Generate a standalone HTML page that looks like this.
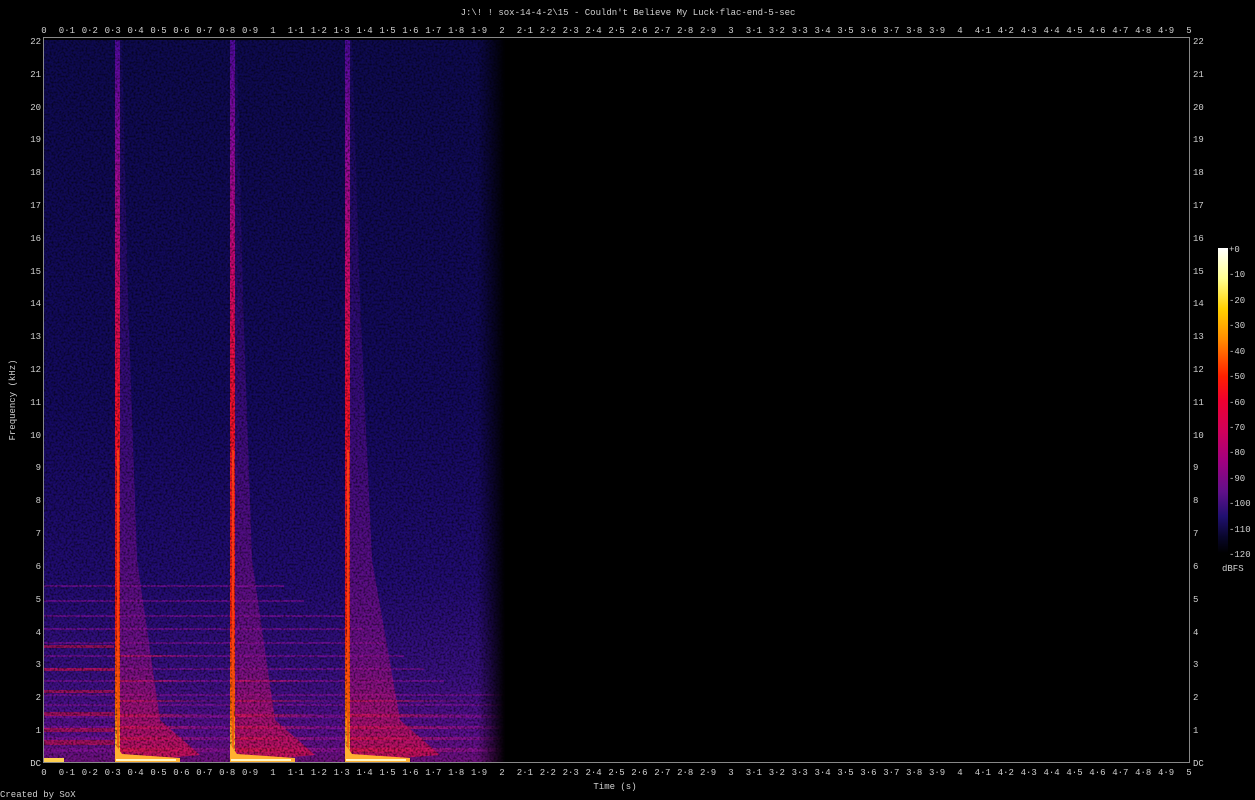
<!DOCTYPE html>
<html><head><meta charset="utf-8"><style>
html,body{margin:0;padding:0;background:#000;width:1255px;height:800px;overflow:hidden}
svg{display:block}
text{font-family:"Liberation Mono",monospace;font-size:9px;fill:#d0d0d0}
</style></head><body>
<svg width="1255" height="800" viewBox="0 0 1255 800" xmlns="http://www.w3.org/2000/svg">
<defs>
<linearGradient id="bg" x1="0" y1="40" x2="0" y2="762" gradientUnits="userSpaceOnUse">
<stop offset="0" stop-color="#0e0a50"/><stop offset="0.5" stop-color="#140a60"/>
<stop offset="0.75" stop-color="#220c74"/><stop offset="0.88" stop-color="#3a1084"/>
<stop offset="0.96" stop-color="#5a1090"/><stop offset="1" stop-color="#701080"/>
</linearGradient>
<linearGradient id="fade" x1="44" y1="0" x2="505" y2="0" gradientUnits="userSpaceOnUse">
<stop offset="0" stop-color="#fff"/><stop offset="0.94" stop-color="#fff"/><stop offset="1" stop-color="#000"/>
</linearGradient>
<mask id="m"><rect x="44" y="40" width="470" height="722" fill="url(#fade)"/></mask>
<linearGradient id="st" x1="0" y1="40" x2="0" y2="762" gradientUnits="userSpaceOnUse">
<stop offset="0" stop-color="#500aa0"/><stop offset="0.15" stop-color="#900aa0"/>
<stop offset="0.32" stop-color="#d00870"/><stop offset="0.5" stop-color="#f81030"/>
<stop offset="0.8" stop-color="#ff2010"/><stop offset="0.93" stop-color="#ff7000"/>
<stop offset="1" stop-color="#ffe040"/>
</linearGradient>
<linearGradient id="dec" x1="0" y1="40" x2="0" y2="762" gradientUnits="userSpaceOnUse">
<stop offset="0" stop-color="#4010a0" stop-opacity="0.15"/><stop offset="0.5" stop-color="#7010a8" stop-opacity="0.4"/>
<stop offset="0.85" stop-color="#a01090" stop-opacity="0.55"/><stop offset="1" stop-color="#e01050" stop-opacity="0.8"/>
</linearGradient>
<linearGradient id="band" x1="0" y1="0" x2="1" y2="0">
<stop offset="0" stop-color="#ff2020" stop-opacity="0.8"/><stop offset="1" stop-color="#a010a0" stop-opacity="0.1"/>
</linearGradient>
<linearGradient id="cb" x1="0" y1="0" x2="0" y2="1">
<stop offset="0" stop-color="#ffffff"/><stop offset="0.1" stop-color="#ffff90"/>
<stop offset="0.2" stop-color="#ffd000"/><stop offset="0.3" stop-color="#ff8c00"/>
<stop offset="0.42" stop-color="#ff2000"/><stop offset="0.5" stop-color="#f00030"/>
<stop offset="0.6" stop-color="#d0005a"/><stop offset="0.7" stop-color="#a00080"/>
<stop offset="0.8" stop-color="#60108a"/><stop offset="0.88" stop-color="#201070"/>
<stop offset="0.95" stop-color="#080628"/><stop offset="1" stop-color="#000"/>
</linearGradient>
<filter id="nz" x="0" y="0" width="100%" height="100%">
<feTurbulence type="fractalNoise" baseFrequency="0.5" numOctaves="2" seed="3"/>
<feColorMatrix values="0 0 0 0 0  0 0 0 0 0  0 0 0 0 0  0 0 0 -2.5 1.5"/>
</filter>
</defs>

<g mask="url(#m)">
<rect x="44" y="40" width="470" height="722" fill="url(#bg)"/>
<g fill="#9010a0" opacity="0.55">
<rect x="44" y="748" width="460" height="4"/><rect x="44" y="737" width="460" height="3"/>
<rect x="44" y="726" width="460" height="3"/><rect x="44" y="715" width="460" height="3"/>
<rect x="44" y="704" width="460" height="2"/><rect x="44" y="694" width="460" height="2"/>
<rect x="44" y="680" width="400" height="2"/><rect x="44" y="668" width="380" height="2"/>
<rect x="44" y="655" width="360" height="2"/><rect x="44" y="642" width="340" height="2"/>
<rect x="44" y="628" width="320" height="2"/><rect x="44" y="615" width="300" height="2"/>
<rect x="44" y="600" width="260" height="2"/><rect x="44" y="585" width="240" height="2"/>
</g>
<g fill="#e01040" opacity="0.55">
<rect x="44" y="740" width="70" height="5"/><rect x="44" y="728" width="70" height="4"/>
<rect x="44" y="712" width="70" height="4"/><rect x="44" y="690" width="70" height="3"/>
<rect x="44" y="668" width="70" height="3"/><rect x="44" y="645" width="70" height="3"/>
</g>
<g fill="url(#band)">
<rect x="118" y="748" width="110" height="4"/><rect x="118" y="737" width="110" height="3"/>
<rect x="118" y="726" width="110" height="3"/><rect x="118" y="714" width="110" height="3"/>
<rect x="118" y="700" width="110" height="2"/><rect x="118" y="680" width="100" height="2"/>
<rect x="118" y="655" width="90" height="2"/>
<rect x="233" y="748" width="110" height="4"/><rect x="233" y="737" width="110" height="3"/>
<rect x="233" y="726" width="110" height="3"/><rect x="233" y="714" width="110" height="3"/>
<rect x="233" y="700" width="110" height="2"/><rect x="233" y="680" width="100" height="2"/>
<rect x="348" y="748" width="150" height="4"/><rect x="348" y="737" width="150" height="3"/>
<rect x="348" y="726" width="150" height="3"/><rect x="348" y="714" width="140" height="3"/>
<rect x="348" y="700" width="130" height="2"/>
</g>
</g>

<g>
<polygon points="118,40 122,40 128,300 137,560 160,720 200,755 118,762" fill="url(#dec)"/>
<polygon points="233,40 237,40 243,300 252,560 275,720 315,755 233,762" fill="url(#dec)"/>
<polygon points="348,40 352,40 360,300 372,560 400,720 440,755 348,762" fill="url(#dec)"/>
<rect x="115" y="40" width="5" height="722" fill="url(#st)"/>
<rect x="230" y="40" width="5" height="722" fill="url(#st)"/>
<rect x="345" y="40" width="5" height="722" fill="url(#st)"/>
</g>
<rect x="44" y="40" width="460" height="722" filter="url(#nz)" opacity="0.6"/>
<g>
<rect x="117" y="450" width="2" height="300" fill="#ff5010" opacity="0.7"/>
<rect x="232" y="450" width="2" height="300" fill="#ff5010" opacity="0.7"/>
<rect x="347" y="450" width="2" height="300" fill="#ff5010" opacity="0.7"/>
<rect x="44" y="758" width="20" height="4" fill="#ffd050"/>
<polygon points="115,744 122,754 180,758 180,762 115,762" fill="#ffb030"/>
<polygon points="230,744 237,754 295,758 295,762 230,762" fill="#ffb030"/>
<polygon points="345,744 352,754 410,758 410,762 345,762" fill="#ffb030"/>
<rect x="116" y="759" width="60" height="2" fill="#fff5c0"/>
<rect x="231" y="759" width="60" height="2" fill="#fff5c0"/>
<rect x="346" y="759" width="60" height="2" fill="#fff5c0"/>
</g>

<rect x="43.5" y="37.5" width="1146" height="725" fill="none" stroke="#888" stroke-width="1"/>

<text x="628" y="15" text-anchor="middle">J:\! ! sox-14-4-2\15 - Couldn't Believe My Luck·flac-end-5-sec</text>
<text x="615" y="789" text-anchor="middle">Time (s)</text>
<text transform="translate(15,400) rotate(-90)" text-anchor="middle">Frequency (kHz)</text>
<text x="0" y="797">Created by SoX</text>

<g text-anchor="middle">
<text x="44" y="33">0</text><text x="66.9" y="33">0·1</text><text x="89.8" y="33">0·2</text><text x="112.7" y="33">0·3</text><text x="135.6" y="33">0·4</text><text x="158.5" y="33">0·5</text><text x="181.4" y="33">0·6</text><text x="204.3" y="33">0·7</text><text x="227.2" y="33">0·8</text><text x="250.1" y="33">0·9</text><text x="273" y="33">1</text><text x="295.9" y="33">1·1</text><text x="318.8" y="33">1·2</text><text x="341.7" y="33">1·3</text><text x="364.6" y="33">1·4</text><text x="387.5" y="33">1·5</text><text x="410.4" y="33">1·6</text><text x="433.3" y="33">1·7</text><text x="456.2" y="33">1·8</text><text x="479.1" y="33">1·9</text><text x="502" y="33">2</text><text x="524.9" y="33">2·1</text><text x="547.8" y="33">2·2</text><text x="570.7" y="33">2·3</text><text x="593.6" y="33">2·4</text><text x="616.5" y="33">2·5</text><text x="639.4" y="33">2·6</text><text x="662.3" y="33">2·7</text><text x="685.2" y="33">2·8</text><text x="708.1" y="33">2·9</text><text x="731" y="33">3</text><text x="753.9" y="33">3·1</text><text x="776.8" y="33">3·2</text><text x="799.7" y="33">3·3</text><text x="822.6" y="33">3·4</text><text x="845.5" y="33">3·5</text><text x="868.4" y="33">3·6</text><text x="891.3" y="33">3·7</text><text x="914.2" y="33">3·8</text><text x="937.1" y="33">3·9</text><text x="960" y="33">4</text><text x="982.9" y="33">4·1</text><text x="1005.8" y="33">4·2</text><text x="1028.7" y="33">4·3</text><text x="1051.6" y="33">4·4</text><text x="1074.5" y="33">4·5</text><text x="1097.4" y="33">4·6</text><text x="1120.3" y="33">4·7</text><text x="1143.2" y="33">4·8</text><text x="1166.1" y="33">4·9</text><text x="1189" y="33">5</text>
</g>
<g text-anchor="middle">
<text x="44" y="775">0</text><text x="66.9" y="775">0·1</text><text x="89.8" y="775">0·2</text><text x="112.7" y="775">0·3</text><text x="135.6" y="775">0·4</text><text x="158.5" y="775">0·5</text><text x="181.4" y="775">0·6</text><text x="204.3" y="775">0·7</text><text x="227.2" y="775">0·8</text><text x="250.1" y="775">0·9</text><text x="273" y="775">1</text><text x="295.9" y="775">1·1</text><text x="318.8" y="775">1·2</text><text x="341.7" y="775">1·3</text><text x="364.6" y="775">1·4</text><text x="387.5" y="775">1·5</text><text x="410.4" y="775">1·6</text><text x="433.3" y="775">1·7</text><text x="456.2" y="775">1·8</text><text x="479.1" y="775">1·9</text><text x="502" y="775">2</text><text x="524.9" y="775">2·1</text><text x="547.8" y="775">2·2</text><text x="570.7" y="775">2·3</text><text x="593.6" y="775">2·4</text><text x="616.5" y="775">2·5</text><text x="639.4" y="775">2·6</text><text x="662.3" y="775">2·7</text><text x="685.2" y="775">2·8</text><text x="708.1" y="775">2·9</text><text x="731" y="775">3</text><text x="753.9" y="775">3·1</text><text x="776.8" y="775">3·2</text><text x="799.7" y="775">3·3</text><text x="822.6" y="775">3·4</text><text x="845.5" y="775">3·5</text><text x="868.4" y="775">3·6</text><text x="891.3" y="775">3·7</text><text x="914.2" y="775">3·8</text><text x="937.1" y="775">3·9</text><text x="960" y="775">4</text><text x="982.9" y="775">4·1</text><text x="1005.8" y="775">4·2</text><text x="1028.7" y="775">4·3</text><text x="1051.6" y="775">4·4</text><text x="1074.5" y="775">4·5</text><text x="1097.4" y="775">4·6</text><text x="1120.3" y="775">4·7</text><text x="1143.2" y="775">4·8</text><text x="1166.1" y="775">4·9</text><text x="1189" y="775">5</text>
</g>
<g text-anchor="end">
<text x="41" y="44">22</text><text x="41" y="77">21</text><text x="41" y="110">20</text><text x="41" y="142">19</text><text x="41" y="175">18</text><text x="41" y="208">17</text><text x="41" y="241">16</text><text x="41" y="274">15</text><text x="41" y="306">14</text><text x="41" y="339">13</text><text x="41" y="372">12</text><text x="41" y="405">11</text><text x="41" y="438">10</text><text x="41" y="470">9</text><text x="41" y="503">8</text><text x="41" y="536">7</text><text x="41" y="569">6</text><text x="41" y="602">5</text><text x="41" y="635">4</text><text x="41" y="667">3</text><text x="41" y="700">2</text><text x="41" y="733">1</text><text x="41" y="766">DC</text>
</g>
<g>
<text x="1193" y="44">22</text><text x="1193" y="77">21</text><text x="1193" y="110">20</text><text x="1193" y="142">19</text><text x="1193" y="175">18</text><text x="1193" y="208">17</text><text x="1193" y="241">16</text><text x="1193" y="274">15</text><text x="1193" y="306">14</text><text x="1193" y="339">13</text><text x="1193" y="372">12</text><text x="1193" y="405">11</text><text x="1193" y="438">10</text><text x="1193" y="470">9</text><text x="1193" y="503">8</text><text x="1193" y="536">7</text><text x="1193" y="569">6</text><text x="1193" y="602">5</text><text x="1193" y="635">4</text><text x="1193" y="667">3</text><text x="1193" y="700">2</text><text x="1193" y="733">1</text><text x="1193" y="766">DC</text>
</g>

<rect x="1218" y="248" width="10" height="305" fill="url(#cb)"/>
<g>
<text x="1229" y="252">+0</text><text x="1229" y="277">-10</text><text x="1229" y="303">-20</text><text x="1229" y="328">-30</text><text x="1229" y="354">-40</text><text x="1229" y="379">-50</text><text x="1229" y="405">-60</text><text x="1229" y="430">-70</text><text x="1229" y="455">-80</text><text x="1229" y="481">-90</text><text x="1229" y="506">-100</text><text x="1229" y="532">-110</text><text x="1229" y="557">-120</text>
<text x="1222" y="571">dBFS</text>
</g>
</svg>
</body></html>
